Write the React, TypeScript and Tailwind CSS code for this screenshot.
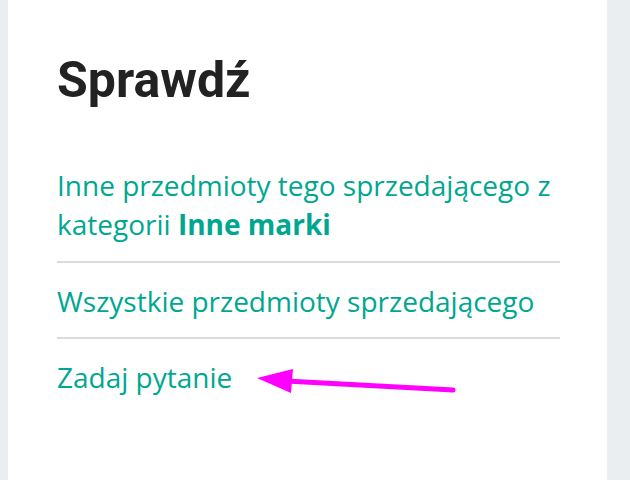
import React from "react";

export default function App() {
  return (
    <div className="w-[630px] h-[480px] bg-[#eaeef1] overflow-hidden">
      <div className="relative ml-[8px] w-[599px] h-[480px] bg-white pl-[49px] pr-[47px] pt-[50px]">
        <h2
          className="text-[50px] font-bold text-[#222222] leading-[60px]"
          style={{ fontFamily: "Roboto, 'Liberation Sans', sans-serif" }}
        >
          Sprawdź
        </h2>
        <div
          className="mt-[56px] text-[28px] leading-[39px] text-[#00a790]"
          style={{ fontFamily: "'Open Sans', 'Noto Sans', sans-serif" }}
        >
          <div className="pb-[17px] border-b-2 border-[#dcdcdc]">
            Inne przedmioty tego sprzedającego z kategorii{" "}
            <span className="font-bold">Inne marki</span>
          </div>
          <div className="pt-[19px] pb-[16px] border-b-2 border-[#dcdcdc]">
            Wszystkie przedmioty sprzedającego
          </div>
          <div className="pt-[19px]">Zadaj pytanie</div>
        </div>
        <svg
          className="absolute left-0 top-0"
          width="599"
          height="480"
          viewBox="0 0 599 480"
        >
          <line
            x1="445"
            y1="390"
            x2="278"
            y2="381"
            stroke="#ff00ff"
            strokeWidth="5"
            strokeLinecap="round"
          />
          <polygon points="249,378 285,369 283,393" fill="#ff00ff" />
        </svg>
      </div>
    </div>
  );
}
